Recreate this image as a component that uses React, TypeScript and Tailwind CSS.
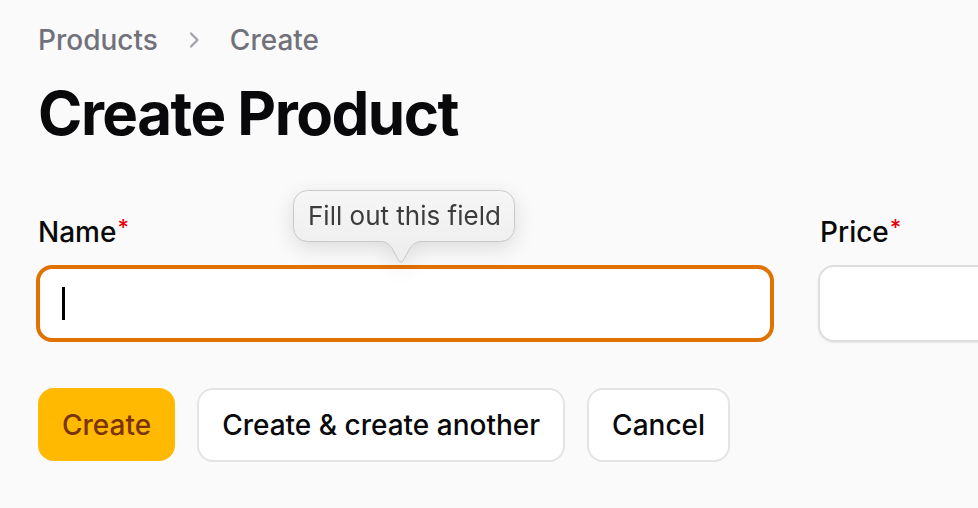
import React from 'react';

const FieldLabel: React.FC<{ text: string }> = ({ text }) => (
  <label className="flex items-start text-[28px] leading-[40px] font-medium text-[#0a0a0a]">
    {text}
    <span className="text-[#e7000b] font-medium text-[22px] leading-[22px] ml-[1px] mt-[4px]">*</span>
  </label>
);

const Tooltip: React.FC = () => (
  <div className="absolute left-[257px] top-[-22px] w-[222px] h-[76px] drop-shadow-[0_6px_10px_rgba(0,0,0,0.12)] pointer-events-none">
    <svg width="222" height="76" viewBox="0 0 222 76" className="absolute inset-0">
      <defs>
        <linearGradient id="tipbg" x1="0" y1="0" x2="0" y2="1">
          <stop offset="0" stopColor="#f6f6f6" />
          <stop offset="1" stopColor="#ededed" />
        </linearGradient>
      </defs>
      <path
        d="M14.5 0.5 H207.5 A14 14 0 0 1 221.5 14.5 V37.5 A14 14 0 0 1 207.5 51.5 H129 C123 51.5 120 54 117 58 L110 71 Q108 74 106 71 L99 58 C96 54 93 51.5 87 51.5 H14.5 A14 14 0 0 1 0.5 37.5 V14.5 A14 14 0 0 1 14.5 0.5 Z"
        fill="url(#tipbg)"
        stroke="#c9c9c9"
        strokeWidth="1"
      />
    </svg>
    <span className="absolute left-[15px] top-[9px] text-[26px] leading-[34px] text-[#3c3c3c] font-[Inter,sans-serif]">
      Fill out this field
    </span>
  </div>
);

const App: React.FC = () => {
  return (
    <div className="min-h-screen h-[508px] overflow-hidden bg-[#fafafa] font-[Inter,'Noto_Sans',sans-serif] text-[#0a0a0a]">
      <div className="pl-[38px] pt-[20px]">
        {/* Breadcrumbs */}
        <nav className="flex items-center text-[28px] leading-[40px] font-medium text-[#71717a]">
          <span>Products</span>
          <svg className="mx-[26px] w-[20px] h-[20px] text-[#a1a1aa]" viewBox="0 0 20 20" fill="none" stroke="currentColor" strokeWidth="2.2" strokeLinecap="round" strokeLinejoin="round">
            <path d="M7 3.5 13.5 10 7 16.5" />
          </svg>
          <span>Create</span>
        </nav>

        <h1 className="mt-[17px] text-[60px] leading-[72px] font-bold tracking-[-1.5px] text-[#09090b]">
          Create Product
        </h1>

        {/* Form */}
        <div className="relative mt-[63px] grid grid-cols-[738px_738px] gap-x-[44px] -ml-[2px]">
          <div className="pl-[2px]">
            <FieldLabel text="Name" />
          </div>
          <div className="pl-[2px]">
            <FieldLabel text="Price" />
          </div>
          <div className="mt-[13px] h-[77px] rounded-[16px] border-[4px] border-[#e17100] bg-white flex items-center pl-[22px]">
            <span className="w-[3px] h-[33px] bg-black" />
          </div>
          <div className="mt-[13px] h-[77px] rounded-[16px] border-2 border-[#dedede] bg-white shadow-[0_1px_2px_rgba(0,0,0,0.08)]" />
          <Tooltip />
        </div>

        {/* Actions */}
        <div className="mt-[46px] flex gap-[22px]">
          <button className="h-[73px] px-[24px] rounded-[16px] bg-[#ffb900] text-[#7b3306] text-[28px] font-medium">
            Create
          </button>
          <button className="h-[74px] px-[23px] rounded-[16px] bg-white border-2 border-[#e4e4e7] text-[28px] font-medium text-[#09090b]">
            Create &amp; create another
          </button>
          <button className="h-[74px] px-[23px] rounded-[16px] bg-white border-2 border-[#e4e4e7] text-[28px] font-medium text-[#09090b]">
            Cancel
          </button>
        </div>
      </div>
    </div>
  );
};

export default App;
